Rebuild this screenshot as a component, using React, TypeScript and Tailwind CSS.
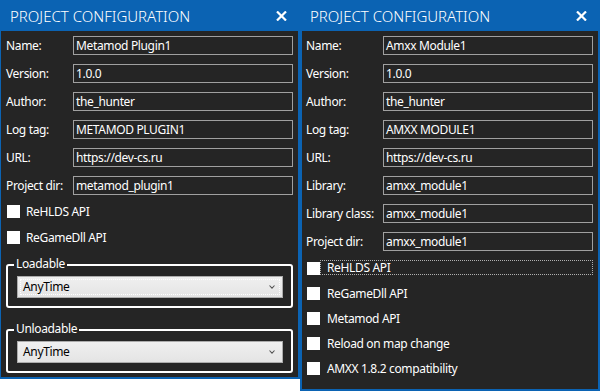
import React from "react";

function TitleBar({ pl }: { pl: string }) {
  return (
    <div className={`h-[31px] bg-[#0b63b3] flex items-center justify-between pr-[11px] ${pl}`}>
      <span className="text-[15px] leading-[20px] font-light text-white tracking-[0px] pt-[1px]">PROJECT CONFIGURATION</span>
      <svg width="11" height="10" viewBox="0 0 11 10" className="mt-[1px]">
        <path d="M1 0.5 L10 9.5 M10 0.5 L1 9.5" stroke="#ffffff" strokeWidth="2.2" fill="none" />
      </svg>
    </div>
  );
}

function Field({ label, value, lw }: { label: string; value: string; lw: string }) {
  return (
    <div className="flex items-center h-[19px]">
      <div className={`${lw} text-white shrink-0 whitespace-nowrap`}>{label}</div>
      <div className="flex-1 h-[19px] border border-[#a0a0a0] pl-[2px] flex items-center text-white">{value}</div>
    </div>
  );
}

function Check({ label, focus, gap }: { label: string; focus?: boolean; gap: string }) {
  return (
    <div className="flex items-center h-[13px] ml-[1px]">
      <div className="w-[13px] h-[13px] bg-white shrink-0" />
      {focus ? (
        <div className="flex-1 h-[15px] -mt-[2px] border border-dotted border-[#b0b0b0] flex items-center pl-[6px] text-white">
          {label}
        </div>
      ) : (
        <div className={`${gap} text-white`}>{label}</div>
      )}
    </div>
  );
}

function Group({ label, focus, mt }: { label: string; focus?: boolean; mt: string }) {
  return (
    <div className={`relative border-2 border-white rounded-[3px] pt-[10px] pb-[8px] pl-[9px] pr-[8px] ${mt}`}>
      <span className="absolute -top-[10px] left-[6px] px-[2px] bg-[#252525] text-white leading-[16px]">{label}</span>
      <div className="relative h-[22px] border border-[#acacac] bg-linear-to-b from-[#f0f0f0] to-[#e4e4e4] flex items-center pl-[5px] pr-[7px]">
        {focus && <div className="absolute inset-[2px] border border-dotted border-white pointer-events-none" />}
        <span className="flex-1 text-black">AnyTime</span>
        <svg width="6" height="4" viewBox="0 0 6 4">
          <path d="M0.5 0.5 L3 3.2 L5.5 0.5" stroke="#555555" strokeWidth="1.1" fill="none" />
        </svg>
      </div>
    </div>
  );
}

export default function App() {
  return (
    <div className="w-[600px] h-[391px] bg-white flex items-start font-['Noto_Sans',sans-serif] text-[12px] leading-[16px] tracking-[-0.35px]">
      <div className="w-[300px] h-[379px] bg-[#252525] border-l border-r-2 border-b-2 border-[#0b63b3] flex flex-col">
        <TitleBar pl="pl-[9px]" />
        <div className="flex flex-col pt-[5px] pl-[5px] pr-[5px]">
          <div className="flex flex-col gap-[9px]">
            <Field lw="w-[67px]" label="Name:" value="Metamod Plugin1" />
            <Field lw="w-[67px]" label="Version:" value="1.0.0" />
            <Field lw="w-[67px]" label="Author:" value="the_hunter" />
            <Field lw="w-[67px]" label="Log tag:" value="METAMOD PLUGIN1" />
            <Field lw="w-[67px]" label="URL:" value="https://dev-cs.ru" />
            <Field lw="w-[67px]" label="Project dir:" value="metamod_plugin1" />
          </div>
          <div className="flex flex-col gap-[13px] mt-[10px]">
            <Check gap="ml-[6px]" label="ReHLDS API" />
            <Check gap="ml-[6px]" label="ReGameDll API" />
          </div>
          <Group label="Loadable" focus mt="mt-[20px]" />
          <Group label="Unloadable" mt="mt-[21px]" />
        </div>
      </div>
      <div className="w-[300px] h-[391px] bg-[#252525] border-l-2 border-r-2 border-b-2 border-[#0b63b3] flex flex-col">
        <TitleBar pl="pl-[8px]" />
        <div className="flex flex-col pt-[5px] pl-[4px] pr-[5px]">
          <div className="flex flex-col gap-[9px]">
            <Field lw="w-[77px]" label="Name:" value="Amxx Module1" />
            <Field lw="w-[77px]" label="Version:" value="1.0.0" />
            <Field lw="w-[77px]" label="Author:" value="the_hunter" />
            <Field lw="w-[77px]" label="Log tag:" value="AMXX MODULE1" />
            <Field lw="w-[77px]" label="URL:" value="https://dev-cs.ru" />
            <Field lw="w-[77px]" label="Library:" value="amxx_module1" />
            <Field lw="w-[77px]" label="Library class:" value="amxx_module1" />
            <Field lw="w-[77px]" label="Project dir:" value="amxx_module1" />
          </div>
          <div className="flex flex-col gap-[12px] mt-[11px]">
            <Check gap="ml-[7px]" label="ReHLDS API" focus />
            <Check gap="ml-[7px]" label="ReGameDll API" />
            <Check gap="ml-[7px]" label="Metamod API" />
            <Check gap="ml-[7px]" label="Reload on map change" />
            <Check gap="ml-[7px]" label="AMXX 1.8.2 compatibility" />
          </div>
        </div>
      </div>
    </div>
  );
}
